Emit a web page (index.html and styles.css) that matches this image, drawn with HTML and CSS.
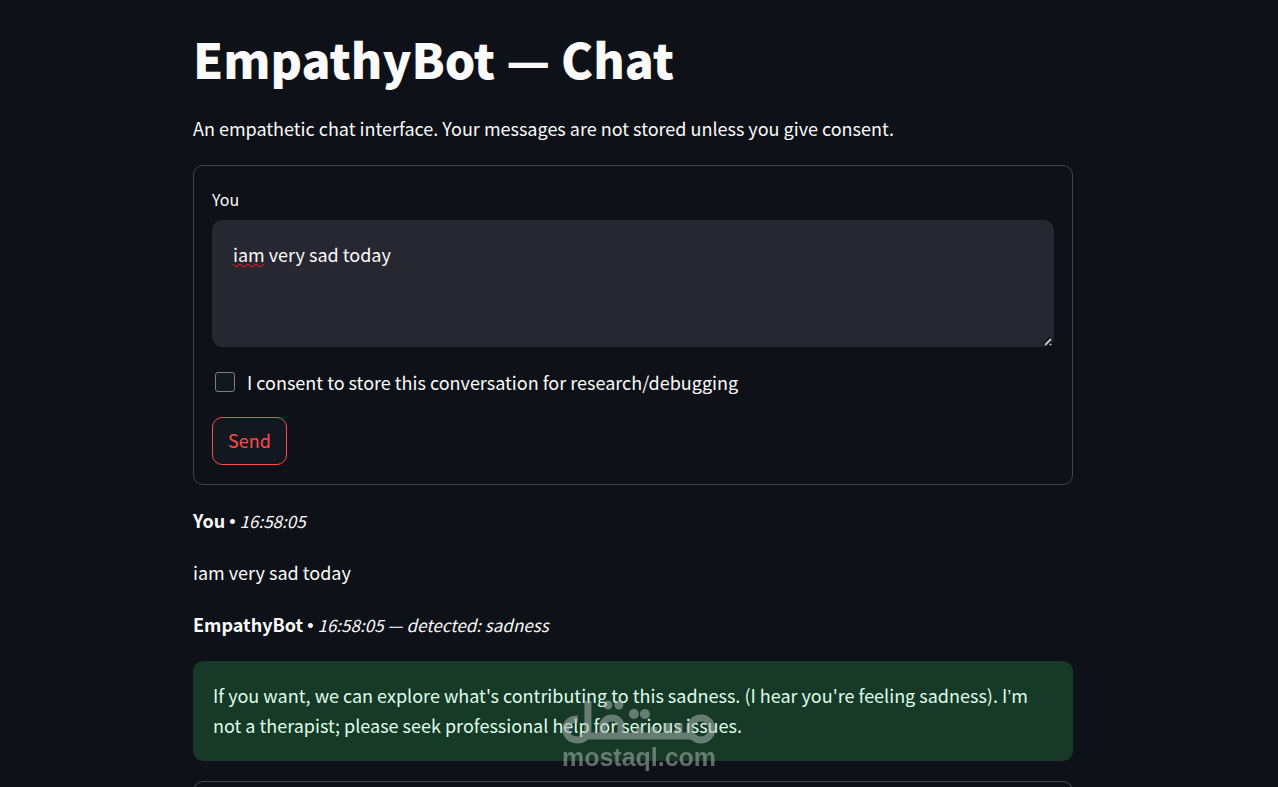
FILE: index.html
```html
<!DOCTYPE html>
<html lang="en">
<head>
<meta charset="utf-8">
<title>EmpathyBot — Chat</title>
<link rel="stylesheet" href="styles.css">
</head>
<body>
<main class="page">
  <h1 class="title">EmpathyBot — Chat</h1>
  <p class="text">An empathetic chat interface. Your messages are not stored unless you give consent.</p>
  <form class="card">
    <label class="field-label" for="message">You</label>
    <div class="field">
      <textarea class="message" id="message" spellcheck="false">iam very sad today</textarea>
      <svg class="squiggle" viewBox="0 0 32 5" aria-hidden="true"><path d="M0 1l3 3 4-3 4 3 4-3 4 3 4-3 4 3 4-3"/></svg>
      <svg class="grip" viewBox="0 0 10 10" aria-hidden="true"><path class="grip-edge" d="M1 8l7-7M6 9l3-3"/><path class="grip-line" d="M2 8l6-6M7 8l1-1"/></svg>
    </div>
    <div class="consent">
      <input class="tick" type="checkbox" id="consent">
      <label for="consent">I consent to store this conversation for research/debugging</label>
    </div>
    <button class="send" type="button">Send</button>
  </form>
  <p class="text"><strong>You</strong> <span class="mark">•</span> <em>16:58:05</em></p>
  <p class="text">iam very sad today</p>
  <p class="text"><strong>EmpathyBot</strong> <span class="mark">•</span> <em>16:58:05 — detected: sadness</em></p>
  <div class="reply">If you want, we can explore what's contributing to this sadness. (I hear you're feeling sadness). I<span class="mark">’</span>m not a therapist; please seek professional help for serious issues.</div>
  <section class="card next"></section>
</main>
<div class="watermark">
  <svg class="logo" viewBox="0 0 154 46" role="img" aria-label="Mostaql logo">
    <path d="M16 20C7 20 4 25 4 30c0 7 5 11 12 11 6 0 10-4 10-10V2M19 39q4-2 8-2H130M41 37V27a9 8 0 0 1 18 0v10M78 37v-9M92 37v-9M105 37V24M117 37V24"/>
    <circle cx="139" cy="30" r="11"/>
    <g class="dots"><circle cx="46" cy="6" r="4.500"/><circle cx="57" cy="6" r="4.500"/><circle cx="72" cy="15" r="5"/><circle cx="83" cy="15" r="5"/></g>
  </svg>
  <span>mostaql.com</span>
</div>
</body>
</html>
```
FILE: styles.css
```css
* { box-sizing: border-box; }
body {
  margin: 0;
  padding-right: 12px;
  height: 100vh;
  overflow: hidden;
  background: #0e1117;
  color: #fafafa;
  font: 18px/30px "Noto Sans CJK SC", "Noto Sans", sans-serif;
}
em { font-size: 17px; line-height: 1; }
.page {
  display: flex;
  flex-direction: column;
  gap: 20px;
  max-width: 880px;
  margin: 0 auto;
  padding-top: 21px;
}
.title { margin: 0; padding-top: 2px; font-size: 48px; line-height: 70px; font-weight: 900; }
.text { margin: 0; padding-bottom: 2px; }
.mark { font-family: "Liberation Sans", sans-serif; line-height: 1; }
.card { border: 1px solid #41444c; border-radius: 10px; padding: 19px 18px; }
.next { border-bottom: 0; }
.field-label { display: block; margin-bottom: 7px; font-size: 16px; line-height: 28px; }
.field { position: relative; }
.message {
  display: block;
  width: 100%;
  height: 127px;
  padding: 19px 21px;
  border: 0;
  border-radius: 10px;
  background: #262730;
  color: #fafafa;
  font: inherit;
  resize: none;
}
.squiggle {
  position: absolute;
  left: 21px;
  top: 43px;
  width: 32px;
  height: 5px;
  fill: none;
  stroke: #ff1820;
  pointer-events: none;
}
.grip { position: absolute; right: 1px; bottom: 0; width: 10px; height: 10px; pointer-events: none; }
.grip-edge { stroke: #0e1117; stroke-width: 4; }
.grip-line { stroke: #c8c8c4; stroke-width: 2; }
.consent { display: flex; align-items: center; gap: 12px; margin: 20px 0; padding-left: 3px; }
.tick {
  appearance: none;
  width: 20px;
  height: 20px;
  margin: 0;
  border: 1px solid #7b7d82;
  border-radius: 3px;
  background: #131720;
}
.send {
  display: block;
  padding: 7px 15px 9px;
  border: 1px solid #ff4b4b;
  border-radius: 10px;
  background: #131720;
  color: #ff4b4b;
  font: inherit;
}
.reply { padding: 19px 20px 21px; border-radius: 10px; background: #173928; color: #dffde9; }
.watermark {
  position: fixed;
  left: 50%;
  bottom: 18px;
  display: flex;
  flex-direction: column;
  align-items: center;
  transform: translateX(-50%);
  color: #aab4af;
  opacity: 0.55;
  font: bold 25px/24px "Liberation Sans", sans-serif;
  pointer-events: none;
}
.logo { width: 154px; height: 46px; fill: none; stroke: currentColor; stroke-width: 7; }
.dots { fill: currentColor; stroke: none; }
```
